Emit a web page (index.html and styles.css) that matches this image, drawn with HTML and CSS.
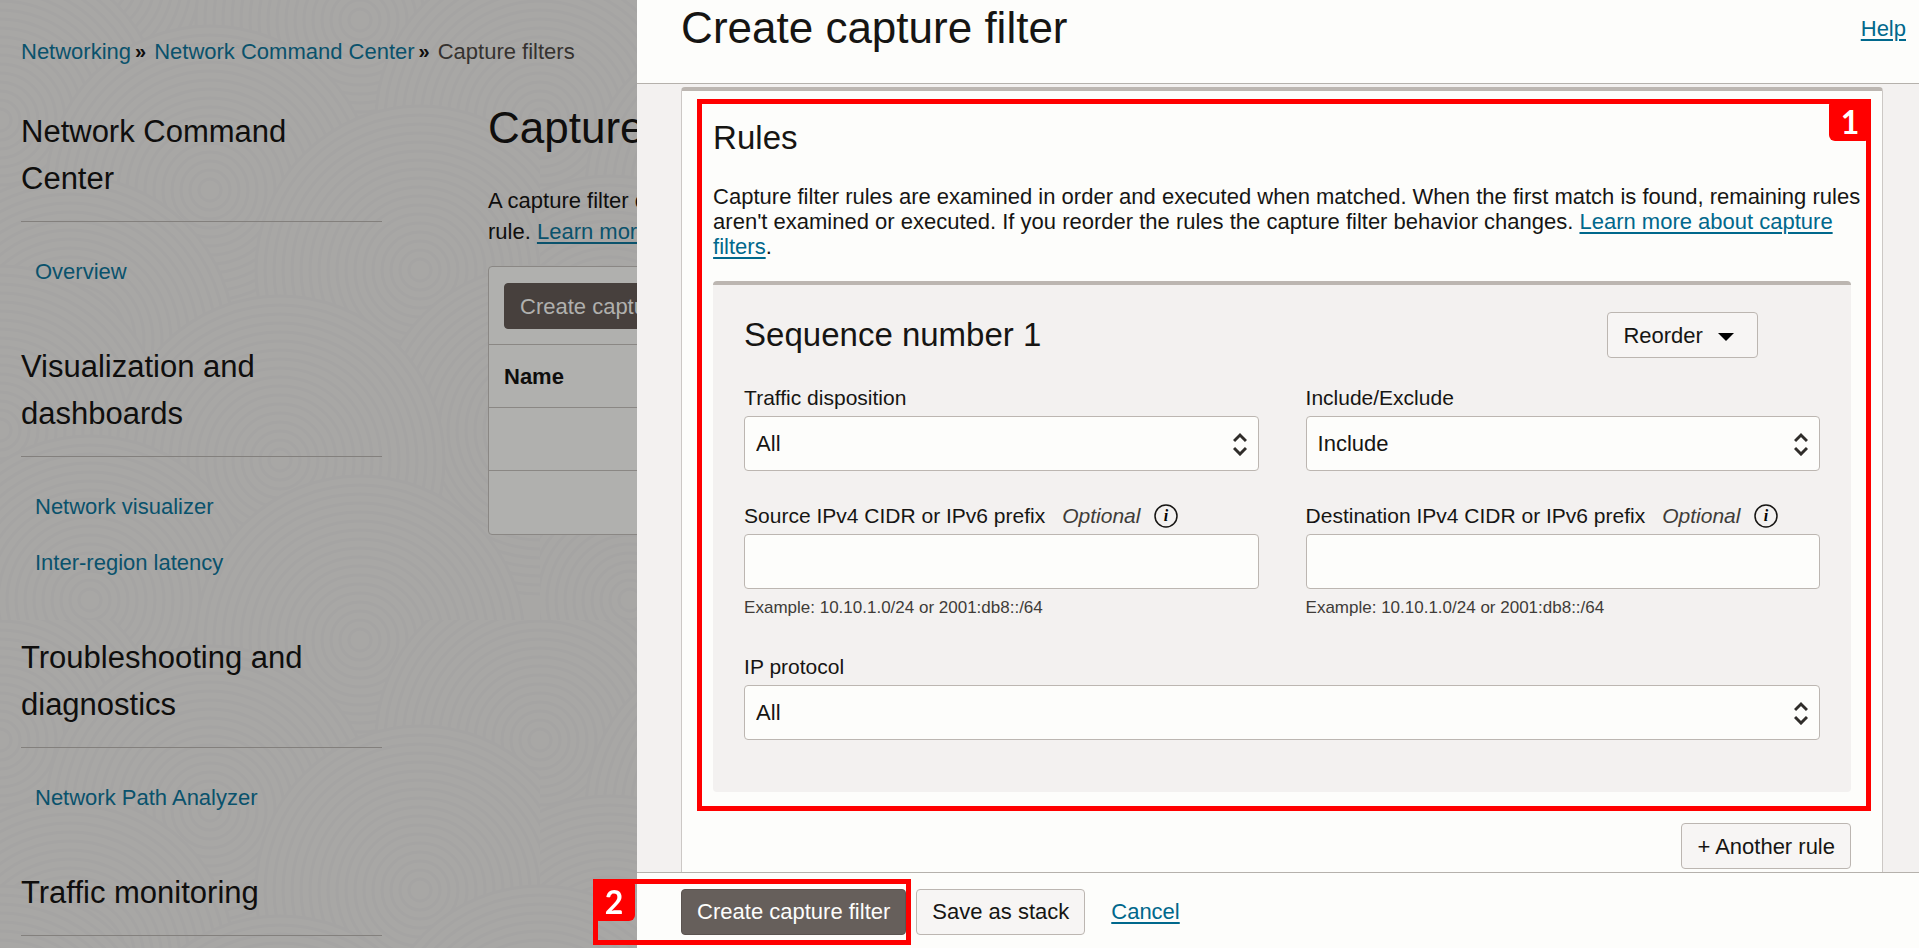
FILE: index.html
```html
<!DOCTYPE html>
<html lang="en">
<head>
    <meta charset="UTF-8">
    <meta name="viewport" content="width=device-width, initial-scale=1.0">
    <title>Create capture filter</title>
    <link rel="stylesheet" href="styles.css">
</head>
<body>
    <div class="page">
        <svg class="texture" aria-hidden="true">
            <defs>
                <g id="rings">
                    <circle r="164"/><circle r="155"/><circle r="146"/><circle r="137"/>
                    <circle r="128"/><circle r="119"/><circle r="110"/><circle r="101"/>
                    <circle r="92"/><circle r="83"/><circle r="74"/><circle r="65"/>
                    <circle r="56"/><circle r="47"/><circle r="38"/><circle r="29"/>
                    <circle r="20"/><circle r="11"/>
                </g>
                <pattern id="waves" width="540" height="620" patternUnits="userSpaceOnUse">
                    <use href="#rings" x="90" y="-20"/>
                    <use href="#rings" x="360" y="20"/>
                    <use href="#rings" x="540" y="120"/>
                    <use href="#rings" x="0" y="120"/>
                    <use href="#rings" x="210" y="190"/>
                    <use href="#rings" x="420" y="270"/>
                    <use href="#rings" x="70" y="340"/>
                    <use href="#rings" x="540" y="430"/>
                    <use href="#rings" x="0" y="430"/>
                    <use href="#rings" x="280" y="460"/>
                    <use href="#rings" x="90" y="600"/>
                    <use href="#rings" x="360" y="640"/>
                </pattern>
            </defs>
            <rect width="100%" height="100%" fill="url(#waves)"/>
        </svg>
        <nav class="breadcrumb">
            <a href="#">Networking</a><span class="sep">»</span>
            <a href="#">Network Command Center</a><span class="sep">»</span>
            <span class="current">Capture filters</span>
        </nav>
        <div class="columns">
            <aside class="sidebar">
                <section class="nav-group">
                    <h2>Network Command Center</h2>
                    <a href="#">Overview</a>
                </section>
                <section class="nav-group">
                    <h2>Visualization and dashboards</h2>
                    <a href="#">Network visualizer</a>
                    <a href="#">Inter-region latency</a>
                </section>
                <section class="nav-group">
                    <h2>Troubleshooting and diagnostics</h2>
                    <a href="#">Network Path Analyzer</a>
                </section>
                <section class="nav-group">
                    <h2>Traffic monitoring</h2>
                </section>
            </aside>
            <main class="content">
                <h1>Capture filters</h1>
                <p>A capture filter contains a set<br>rule. <a href="#">Learn more</a></p>
                <div class="list">
                    <div class="toolbar">
                        <button class="btn primary" type="button">Create capture filter</button>
                    </div>
                    <table>
                        <thead>
                            <tr><th>Name</th></tr>
                        </thead>
                        <tbody>
                            <tr><td></td></tr>
                            <tr><td></td></tr>
                        </tbody>
                    </table>
                </div>
            </main>
        </div>
    </div>

    <form class="drawer">
        <header class="drawer-header">
            <h1>Create capture filter</h1>
            <a href="#">Help</a>
        </header>
        <div class="drawer-body">
            <div class="card">
                <section class="rules">
                    <h2>Rules</h2>
                    <p>Capture filter rules are examined in order and executed when matched. When the first match is found, remaining rules aren't examined or executed. If you reorder the rules the capture filter behavior changes. <a href="#">Learn more about capture filters</a>.</p>
                    <div class="rule">
                        <div class="rule-head">
                            <h2>Sequence number 1</h2>
                            <button class="btn" type="button">Reorder
                                <svg class="caret" viewBox="0 0 16 8"><path d="M0 0H16L8 8Z"/></svg>
                            </button>
                        </div>
                        <div class="fields">
                            <div class="field">
                                <label for="disposition">Traffic disposition</label>
                                <select id="disposition"><option>All</option></select>
                            </div>
                            <div class="field">
                                <label for="include">Include/Exclude</label>
                                <select id="include"><option>Include</option><option>Exclude</option></select>
                            </div>
                            <div class="field">
                                <div class="label-row">
                                    <label for="source">Source IPv4 CIDR or IPv6 prefix</label>
                                    <em>Optional</em>
                                    <svg class="info" viewBox="0 0 24 24"><circle cx="12" cy="12" r="11"/><text x="12" y="17">i</text></svg>
                                </div>
                                <input type="text" id="source">
                                <small>Example: 10.10.1.0/24 or 2001:db8::/64</small>
                            </div>
                            <div class="field">
                                <div class="label-row">
                                    <label for="destination">Destination IPv4 CIDR or IPv6 prefix</label>
                                    <em>Optional</em>
                                    <svg class="info" viewBox="0 0 24 24"><circle cx="12" cy="12" r="11"/><text x="12" y="17">i</text></svg>
                                </div>
                                <input type="text" id="destination">
                                <small>Example: 10.10.1.0/24 or 2001:db8::/64</small>
                            </div>
                            <div class="field wide">
                                <label for="protocol">IP protocol</label>
                                <select id="protocol"><option>All</option></select>
                            </div>
                        </div>
                    </div>
                    <div class="callout callout-rules"><span class="badge">1</span></div>
                </section>
                <div class="card-actions">
                    <button class="btn" type="button">+ Another rule</button>
                </div>
            </div>
        </div>
        <footer class="drawer-footer">
            <div class="submit">
                <button class="btn primary" type="submit">Create capture filter</button>
                <div class="callout callout-submit"><span class="badge">2</span></div>
            </div>
            <button class="btn" type="button">Save as stack</button>
            <a href="#">Cancel</a>
        </footer>
    </form>
</body>
</html>
```
FILE: styles.css
```css
* {
    box-sizing: border-box;
    margin: 0;
    padding: 0;
}
body {
    font-family: "Liberation Sans", Arial, Helvetica, sans-serif;
    font-size: 22px;
    line-height: 25px;
    color: #161513;
    height: 100vh;
    overflow: hidden;
}
h1, h2 {
    font-weight: normal;
}
h1 {
    font-size: 44px;
    line-height: 50px;
}
a {
    color: #00688c;
    text-decoration-thickness: 2px;
    text-underline-offset: 3px;
}
.btn {
    height: 46px;
    padding: 0 15px;
    font: inherit;
    color: #161513;
    background-color: #f7f5f4;
    border: 1px solid #bcb6b1;
    border-radius: 4px;
    white-space: nowrap;
    cursor: pointer;
}
.btn.primary {
    color: #fdfdfb;
    background-color: #665f5b;
    border-color: #5b5450;
}

/* dimmed page beside the drawer */
.page {
    position: relative;
    width: 33.2%;
    height: 100vh;
    overflow: hidden;
    padding: 39px 21px 0;
    background-color: #a8a7a5;
    color: #0f0e0d;
}
.texture {
    position: absolute;
    inset: 0;
    width: 100%;
    height: 100%;
    fill: #a8a7a5;
    stroke: #a5a4a3;
    stroke-width: 3;
}
.texture rect {
    stroke: none;
}
.breadcrumb,
.columns {
    position: relative;
}
.page a {
    color: #0a526c;
}
.breadcrumb a,
.nav-group a {
    text-decoration: none;
}
.breadcrumb {
    display: flex;
    white-space: nowrap;
}
.sep {
    margin: 0 8px 0 4px;
    font-size: 20px;
    font-weight: bold;
}
.current {
    color: #35322f;
}
.columns {
    display: flex;
    gap: 106px;
    padding-top: 44px;
}
.sidebar {
    flex: none;
    width: 361px;
    display: flex;
    flex-direction: column;
    gap: 43px;
}
.nav-group h2 {
    font-size: 31px;
    line-height: 47px;
    padding-bottom: 19px;
    margin-bottom: 22px;
    border-bottom: 1px solid #83807d;
}
.nav-group a {
    display: block;
    padding-left: 14px;
    line-height: 56px;
}
.content {
    flex: 1;
    white-space: nowrap;
}
.content h1 {
    line-height: 40px;
}
.content p {
    line-height: 31px;
    padding: 37px 0 19px;
}
.list {
    background-color: #b0b0ae;
    border: 1px solid #8a8784;
    border-radius: 4px;
}
.toolbar {
    padding: 16px 15px 15px;
}
.list .btn.primary {
    color: #b0b0ae;
    background-color: #47403d;
    border-color: #47403d;
}
table {
    width: 100%;
    border-collapse: collapse;
}
th, td {
    height: 63px;
    padding: 0 15px;
    text-align: left;
    border-top: 1px solid #8a8784;
}

/* drawer */
.drawer {
    position: fixed;
    top: 0;
    right: 0;
    bottom: 0;
    width: 66.8%;
    display: flex;
    flex-direction: column;
    background-color: #f3f1f0;
}
.drawer-header {
    flex: none;
    display: flex;
    justify-content: space-between;
    align-items: center;
    padding: 3px 13px 30px 44px;
    background-color: #fdfdfb;
    border-bottom: 1px solid #b5b1ac;
}
.drawer-body {
    flex: 1;
    min-height: 0;
    overflow: hidden;
    padding: 3px 36px 0 44px;
}
.card {
    padding: 28px 31px;
    background-color: #fdfdfb;
    border: 1px solid #ccc8c5;
    border-top: 4px solid #bcb6b1;
    border-radius: 4px;
}
.card h2 {
    font-size: 33px;
    line-height: 38px;
}
.rules {
    position: relative;
}
.rules p {
    margin-right: -12px;
    padding: 27px 0 22px;
}
.rule {
    padding: 27px 31px 52px;
    background-color: #f3f1f0;
    border-top: 4px solid #bcb6b1;
    border-radius: 4px;
}
.rule-head {
    display: flex;
    justify-content: space-between;
    align-items: center;
    padding-right: 62px;
    margin-bottom: 27px;
}
.caret {
    width: 16px;
    height: 8px;
    margin: 0 8px 2px 9px;
}
.fields {
    display: grid;
    grid-template-columns: 1fr 1fr;
    gap: 32px 47px;
}
.field {
    display: flex;
    flex-direction: column;
}
.field label,
.field em {
    font-size: 21px;
}
.wide {
    grid-column: 1 / -1;
    margin-top: 4px;
}
.label-row {
    display: flex;
    align-items: center;
    height: 25px;
}
.label-row em {
    margin: 0 14px 0 17px;
    color: #403c38;
}
.info {
    width: 24px;
    height: 24px;
}
.info circle {
    fill: none;
    stroke: #161513;
    stroke-width: 1.5;
}
.info text {
    font-family: "Liberation Serif", serif;
    font-size: 16px;
    font-style: italic;
    font-weight: bold;
    text-anchor: middle;
}
select,
input {
    width: 100%;
    height: 55px;
    margin-top: 6px;
    padding: 0 11px;
    font: inherit;
    color: #161513;
    background-color: #fdfdfb;
    border: 1px solid #bcb6b1;
    border-radius: 4px;
}
select {
    appearance: none;
    background-image: url("data:image/svg+xml,%3Csvg xmlns='http://www.w3.org/2000/svg' width='14' height='24' fill='none' stroke='%23302d2a' stroke-width='3'%3E%3Cpath d='M1 9L7 3L13 9M1 16L7 22L13 16'/%3E%3C/svg%3E");
    background-repeat: no-repeat;
    background-position: right 11px center;
}
small {
    margin-top: 9px;
    font-size: 17px;
    line-height: 20px;
    color: #403c38;
}
.card-actions {
    display: flex;
    justify-content: flex-end;
    padding-top: 31px;
}
.drawer-footer {
    flex: none;
    display: flex;
    align-items: center;
    gap: 10px;
    height: 76px;
    padding: 2px 44px 0;
    background-color: #fdfdfb;
    border-top: 1px solid #b5b1ac;
}
.drawer-footer a {
    margin-left: 16px;
}
.submit {
    position: relative;
}

/* numbered red frames */
.callout {
    position: absolute;
    border: 5px solid #ff0000;
    pointer-events: none;
}
.callout-rules {
    inset: -20px -20px -19px -16px;
}
.callout-submit {
    inset: -10px -5px -10px -88px;
}
.badge {
    position: absolute;
    top: -5px;
    width: 42px;
    height: 42px;
    border-radius: 6px;
    background-color: #ff0000;
    color: #ffffff;
    font-family: Lato, sans-serif;
    font-size: 32px;
    font-weight: bold;
    line-height: 45px;
    text-align: center;
}
.callout-rules .badge {
    right: -5px;
}
.callout-submit .badge {
    left: -5px;
}
```
